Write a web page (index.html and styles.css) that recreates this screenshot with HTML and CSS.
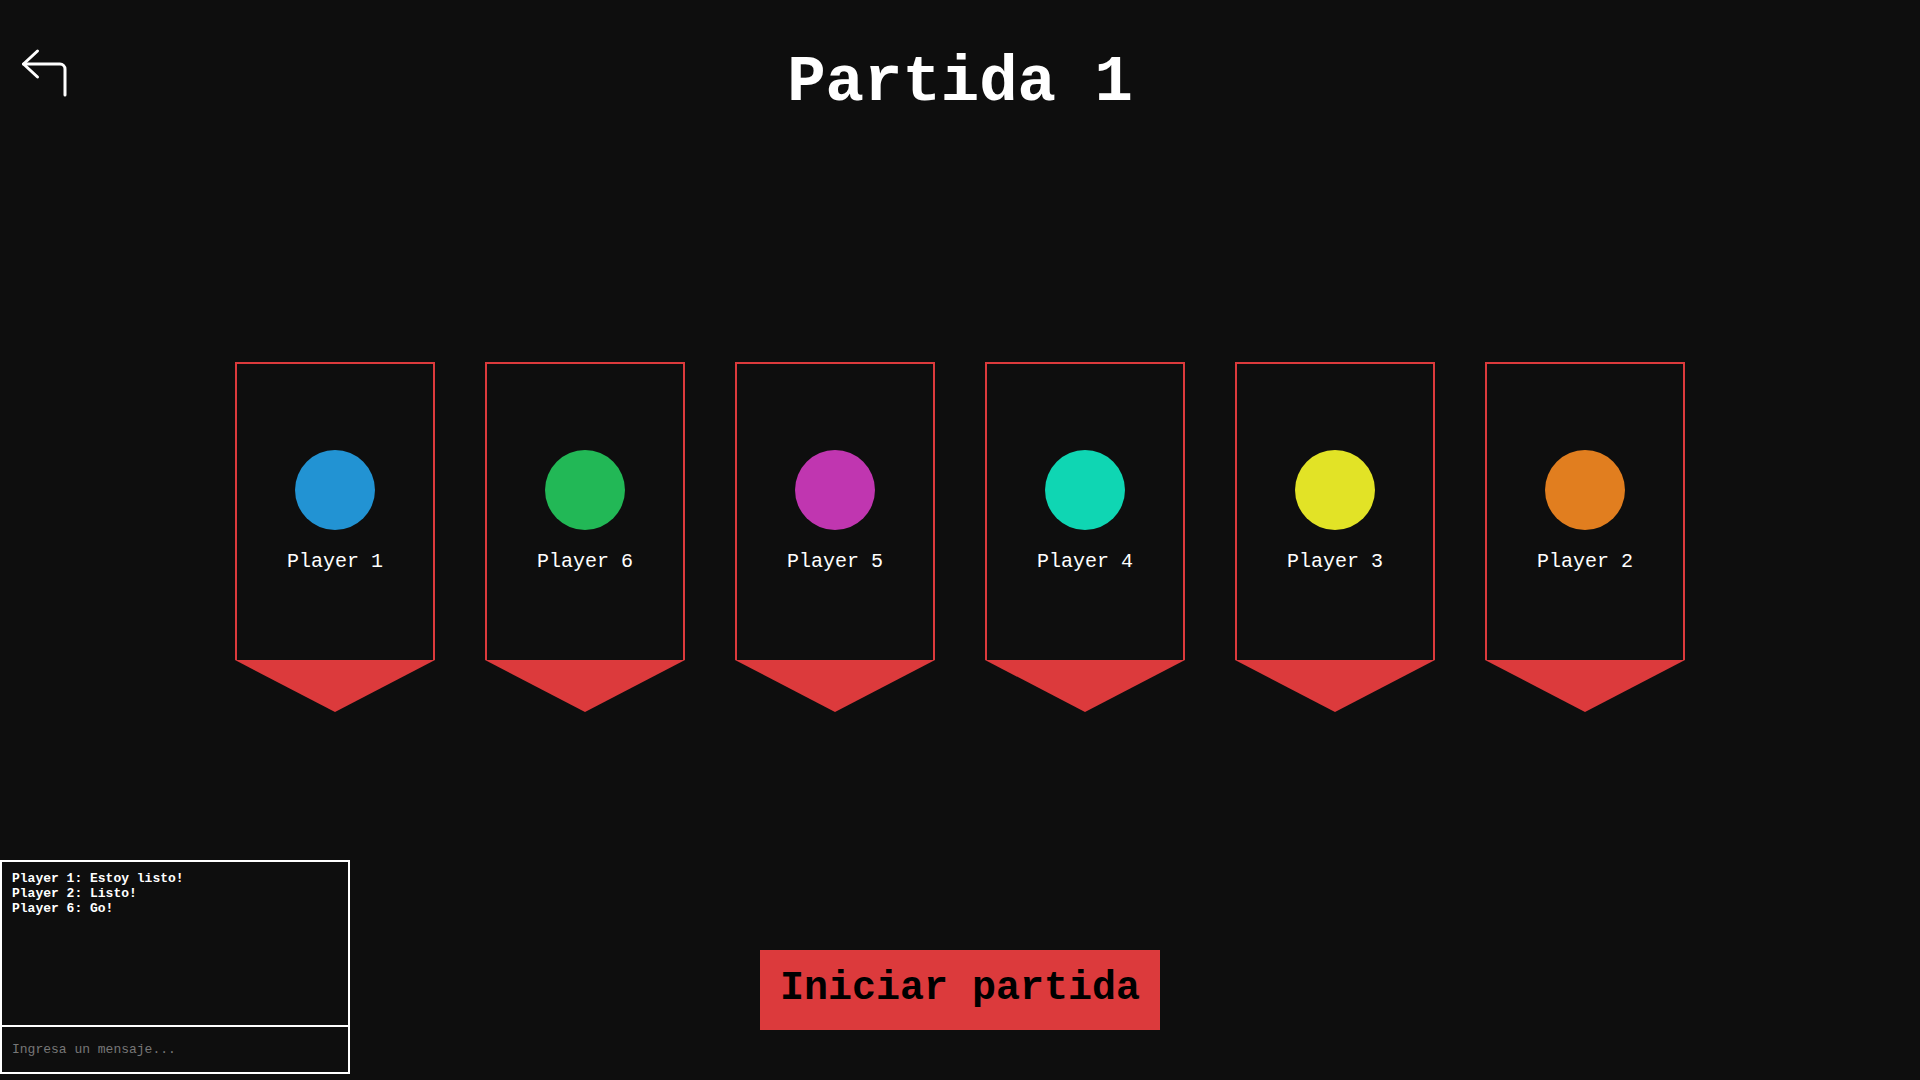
FILE: index.html
```html
<!DOCTYPE html>
<html lang="es">
<head>
<meta charset="utf-8">
<title>Partida 1</title>
<link rel="stylesheet" href="styles.css">
</head>
<body>
<div class="page">
  <header class="header">
    <button class="back" aria-label="Volver">
      <svg width="60" height="60" viewBox="0 0 60 60" fill="none" stroke="#fff" stroke-width="3" stroke-linecap="round" stroke-linejoin="round">
        <path d="M22.5 11 L8.5 24 L22.5 37"/>
        <path d="M8.5 24 H45 A5 5 0 0 1 50 29 V55"/>
      </svg>
    </button>
    <h1 class="title">Partida 1</h1>
    <div></div>
  </header>

  <section class="players">
    <div class="player">
      <div class="banner"><span class="dot dot-blue"></span><span class="name">Player 1</span></div>
      <div class="tail"></div>
    </div>
    <div class="player">
      <div class="banner"><span class="dot dot-green"></span><span class="name">Player 6</span></div>
      <div class="tail"></div>
    </div>
    <div class="player">
      <div class="banner"><span class="dot dot-magenta"></span><span class="name">Player 5</span></div>
      <div class="tail"></div>
    </div>
    <div class="player">
      <div class="banner"><span class="dot dot-teal"></span><span class="name">Player 4</span></div>
      <div class="tail"></div>
    </div>
    <div class="player">
      <div class="banner"><span class="dot dot-yellow"></span><span class="name">Player 3</span></div>
      <div class="tail"></div>
    </div>
    <div class="player">
      <div class="banner"><span class="dot dot-orange"></span><span class="name">Player 2</span></div>
      <div class="tail"></div>
    </div>
  </section>

  <div class="actions">
    <button class="start">Iniciar partida</button>
  </div>
</div>

<aside class="chat">
  <div class="messages">
    <div>Player 1: Estoy listo!</div>
    <div>Player 2: Listo!</div>
    <div>Player 6: Go!</div>
  </div>
  <input class="chat-input" type="text" placeholder="Ingresa un mensaje...">
</aside>
</body>
</html>
```

FILE: styles.css
```css
* { box-sizing: border-box; }

html, body {
  margin: 0;
  padding: 0;
  height: 100%;
}

body {
  background: #0e0e0e;
  color: #ffffff;
  font-family: "Courier New", "Liberation Mono", monospace;
  overflow: hidden;
}

.page {
  display: flex;
  flex-direction: column;
  height: 100vh;
}

.header {
  display: grid;
  grid-template-columns: 1fr auto 1fr;
  align-items: start;
  padding: 40px 15px 0;
}

.back {
  justify-self: start;
  width: 60px;
  height: 60px;
  padding: 0;
  margin: 0;
  border: none;
  background: transparent;
  cursor: pointer;
  display: block;
}

.back svg { display: block; }

.title {
  margin: 7px 0 0;
  font-size: 64px;
  line-height: 72px;
  font-weight: 700;
  color: #ffffff;
}

.players {
  display: flex;
  justify-content: center;
  gap: 50px;
  margin-top: 243px;
}

.player {
  width: 200px;
  display: flex;
  flex-direction: column;
}

.banner {
  height: 298px;
  border: 2px solid #dc3a3c;
  border-bottom: none;
  display: flex;
  flex-direction: column;
  align-items: center;
  padding-top: 86px;
}

.dot {
  width: 80px;
  height: 80px;
  border-radius: 50%;
  display: block;
}

.dot-blue { background: #2293d3; }
.dot-green { background: #22b856; }
.dot-magenta { background: #c036b0; }
.dot-teal { background: #0fd6b3; }
.dot-yellow { background: #e2e326; }
.dot-orange { background: #e17e1f; }

.name {
  margin-top: 20px;
  font-size: 20px;
  line-height: 24px;
  font-weight: 400;
  color: #ffffff;
}

.tail {
  height: 52px;
  background: #dc3a3c;
  clip-path: polygon(0 0, 100% 0, 50% 100%);
}

.actions {
  display: flex;
  justify-content: center;
  margin-top: 238px;
}

.start {
  width: 400px;
  height: 80px;
  border: none;
  background: #dc3a3c;
  color: #000000;
  font-family: "Courier New", "Liberation Mono", monospace;
  font-size: 40px;
  font-weight: 700;
  padding: 0 0 4px;
  cursor: pointer;
}

.chat {
  position: fixed;
  left: 0;
  bottom: 6px;
  width: 350px;
  height: 214px;
  border: 2px solid #ffffff;
  display: flex;
  flex-direction: column;
  background: #0e0e0e;
}

.messages {
  flex: 1;
  padding: 9px 10px;
  font-size: 13px;
  line-height: 15px;
  font-weight: 700;
  color: #ffffff;
}

.chat-input {
  height: 47px;
  border: none;
  border-top: 2px solid #ffffff;
  background: #0e0e0e;
  color: #ffffff;
  font-family: "Courier New", "Liberation Mono", monospace;
  font-size: 13px;
  padding: 0 10px;
  outline: none;
}

.chat-input::placeholder { color: #777777; }
```
